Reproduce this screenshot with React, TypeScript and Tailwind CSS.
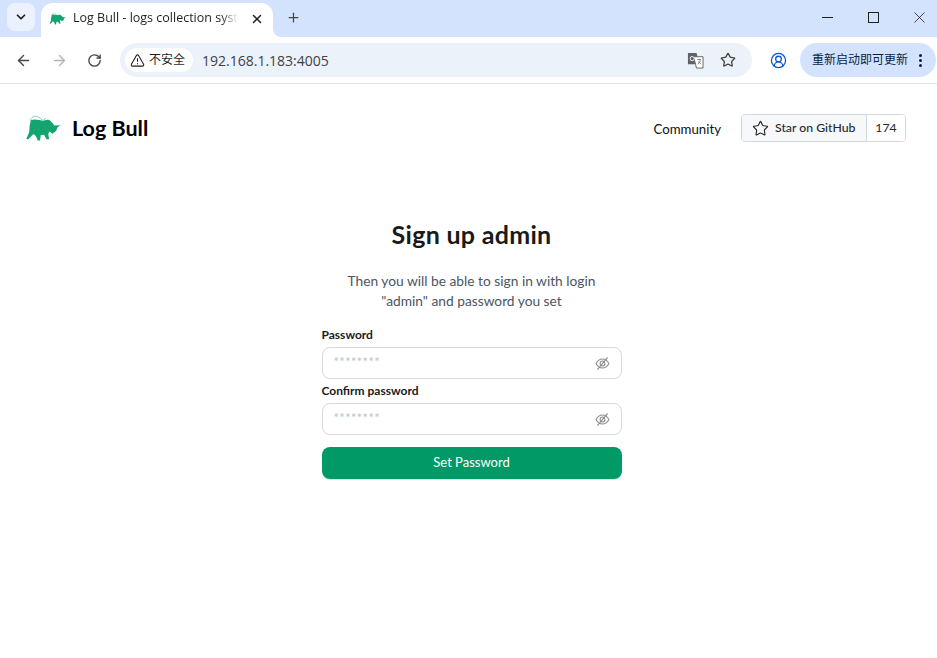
import { ArrowLeft, ArrowRight, ChevronDown, Plus, RotateCw, Star, TriangleAlert, UserCircle2, X } from 'lucide-react'

const uiFont = "font-['Open_Sans','Noto_Sans_CJK_SC',sans-serif]"

const BullLogo = ({ className }: { className: string }) => (
  <svg viewBox="40 42 110 83" className={className}>
    <path
      fill="#14a470"
      d="M58 60 C70 55 85 60 97 62 C105 57 115 57 121 65 L130 76 L148 75 L139 82 L135 93 L124 101 L115 94 L111 101 L114 118 L106 118 L98 104 L88 106 L86 122 L79 122 L73 108 L66 102 L50 118 L44 117 L53 96 L54 78 Z"
    />
    <path d="M56 62 C58 50 68 46 76 48 C86 50 92 62 98 60 L103 52" fill="none" stroke="#3ab58a" strokeWidth="2" />
  </svg>
)

const EyeSlash = () => (
  <svg viewBox="0 0 16 16" className="size-[15px]" fill="none" stroke="#8c8c8c" strokeWidth="1.1">
    <path d="M1 8 C3 4.5 5.5 3.2 8 3.2 C10.5 3.2 13 4.5 15 8 C13 11.5 10.5 12.8 8 12.8 C5.5 12.8 3 11.5 1 8 Z" />
    <circle cx="8" cy="8" r="2.6" />
    <path d="M13.5 1.5 L2.5 14.5" />
  </svg>
)

const PasswordField = ({ label }: { label: string }) => (
  <div>
    <div className="h-[21px] text-[12px] leading-[18px] font-bold text-[#1a1a1a]">{label}</div>
    <div className="flex h-8 items-center justify-between rounded-lg border border-[#d9d9d9] pl-[11px] pr-[11px]">
      <span className="mb-px text-[13px] leading-none tracking-[0.3px] text-[#c4c4c4]">********</span>
      <EyeSlash />
    </div>
  </div>
)

export default function App() {
  return (
    <div className="flex h-[658px] w-[937px] flex-col overflow-hidden bg-white font-['Lato',sans-serif]">
      {/* browser tab strip */}
      <div className={`flex h-[37px] items-end bg-[#d3e3fd] ${uiFont}`}>
        <div className="mb-[6px] ml-[7px] flex size-7 items-center justify-center rounded-lg bg-[#ecf2fd]">
          <ChevronDown className="size-[14px] text-[#1f1f1f]" strokeWidth={3} />
        </div>
        <div className="relative ml-[6px] flex h-[34px] w-[232px] items-center rounded-t-xl bg-white pb-[3px] pl-[8px] pr-[9px]">
          <BullLogo className="h-[13px] w-[17px]" />
          <span className="ml-[7px] bg-gradient-to-r from-[#1f1f1f] from-[90%] to-transparent bg-clip-text text-[12.5px] whitespace-nowrap text-transparent">Log Bull - logs collection syst</span>
          <X className="ml-auto size-[14px] text-[#1f1f1f]" strokeWidth={2.5} />
          <div className="absolute right-[-8px] bottom-0 size-2 bg-white">
            <div className="size-full rounded-bl-[8px] bg-[#d3e3fd]" />
          </div>
        </div>
        <Plus className="mb-[12px] ml-[13px] size-[15px] text-[#444746]" strokeWidth={2} />
        <div className="mb-[12px] ml-auto flex items-center gap-[31px] pr-[10px] text-[#1f1f1f]">
          <div className="flex w-[15px] justify-center">
            <div className="h-px w-[11px] bg-[#1f1f1f]" />
          </div>
          <div className="flex w-[15px] justify-center">
            <div className="size-[11px] border border-[#1f1f1f]" />
          </div>
          <div className="flex h-[15px] w-[15px] items-center justify-center">
            <X className="size-[19px] shrink-0" strokeWidth={1} />
          </div>
        </div>
      </div>

      {/* address bar */}
      <div className={`flex h-[47px] items-center border-b border-[#e3e3e3] bg-white ${uiFont}`}>
        <ArrowLeft className="ml-[15px] size-[17px] text-[#474747]" strokeWidth={2} />
        <ArrowRight className="ml-[19px] size-[17px] text-[#b3b3b3]" strokeWidth={2} />
        <RotateCw className="ml-[19px] size-[15px] text-[#474747]" strokeWidth={2.2} />
        <div className="ml-[18px] flex h-[34px] w-[632px] items-center rounded-full bg-[#ecf2fa] pl-[5px] pr-[16px]">
          <div className="flex h-[24px] items-center gap-[4px] rounded-full bg-white pl-[5px] pr-[8px]">
            <TriangleAlert className="size-[15px] text-[#1f1f1f]" strokeWidth={1.7} />
            <span className="text-[12px] text-[#1f1f1f]">不安全</span>
          </div>
          <span className="ml-[9px] text-[14px] text-[#3f4145]">192.168.1.183:4005</span>
          <svg viewBox="0 0 18 18" className="ml-auto size-[17px]">
            <path d="M1 1 H10 L11 4 V13 H1 Z" fill="#5f6368" />
            <path d="M7 5 H17 V17 H10 L9 13 Z" fill="#fff" stroke="#5f6368" strokeWidth="1" />
            <path d="M11 8 H15 M13 8 V9 M11.5 13 L14.5 9 M12 10 L15 13" stroke="#5f6368" strokeWidth="0.8" fill="none" />
            <circle cx="5.5" cy="7" r="2.2" fill="none" stroke="#fff" strokeWidth="1" />
          </svg>
          <Star className="ml-[16px] size-[16px] text-[#474747]" strokeWidth={2} />
        </div>
        <UserCircle2 className="ml-[18px] size-[17px] text-[#0b57d0]" strokeWidth={1.8} />
        <div className="ml-[13px] flex h-[34px] w-[136px] items-center rounded-full bg-[#d3e3fd] pl-[12px]">
          <span className="text-[12px] whitespace-nowrap text-[#0a1f44]">重新启动即可更新</span>
          <div className="ml-[11px] flex flex-col gap-[2px]">
            <span className="size-[3px] rounded-full bg-[#0a1f44]" />
            <span className="size-[3px] rounded-full bg-[#0a1f44]" />
            <span className="size-[3px] rounded-full bg-[#0a1f44]" />
          </div>
        </div>
      </div>

      {/* page header */}
      <header className="flex h-[88px] items-center pl-[25px] pr-[31px]">
        <BullLogo className="h-[28px] w-[36px]" />
        <span className="ml-[11px] text-[21.5px] font-bold text-black">Log Bull</span>
        <span className="ml-auto mt-[3px] text-[13.25px] text-[#111]">Community</span>
        <div className="ml-[20px] flex h-[28px] overflow-hidden rounded-[4px] border border-[#d1d9e0] text-[12.25px] text-[#25292e]">
          <div className="flex w-[125px] items-center gap-[6px] border-r border-[#d1d9e0] bg-[#f6f8fa] pl-[10px] font-medium">
            <Star className="size-[17px]" strokeWidth={1.6} />
            <span>Star on GitHub</span>
          </div>
          <div className="flex w-[38px] items-center justify-center bg-white">174</div>
        </div>
      </header>

      {/* sign up form */}
      <main className="flex flex-col items-center pl-[6px] pt-[46px]">
        <div className="flex w-[300px] flex-col">
          <h1 className="text-center text-[25px] leading-[32px] font-bold tracking-[0.3px] text-[#1a1a1a]">Sign up admin</h1>
          <p className="mt-[21px] text-center text-[13.75px] leading-[20px] text-[#4b5563]">
            Then you will be able to sign in with login
            <br />
            "admin" and password you set
          </p>
          <div className="mt-[15px] flex flex-col">
            <PasswordField label="Password" />
            <div className="mt-[3px]">
              <PasswordField label="Confirm password" />
            </div>
          </div>
          <button className="mt-3 h-[32px] rounded-lg bg-[#019a66] text-[13px] text-white shadow-[0_1px_0_#cdeee0]">Set Password</button>
        </div>
      </main>
    </div>
  )
}
